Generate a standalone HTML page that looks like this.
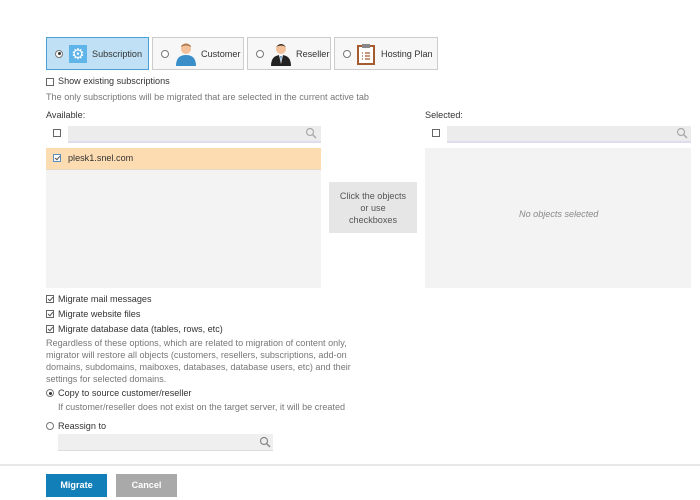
<!DOCTYPE html>
<html><head><style>
body{margin:0;width:700px;height:500px;background:#fff;font-family:"Liberation Sans",sans-serif;font-size:9.1px;color:#333;position:relative;overflow:hidden}
.a{position:absolute}
.tab{position:absolute;top:37px;height:33px;border:1px solid #ccc;background:#f7f7f7;box-sizing:border-box;display:flex;align-items:center;color:#333}
.tab.on{background:#bfe0f5;border-color:#4a9fd6}
.rad{width:8px;height:8px;border:1px solid #777;border-radius:50%;box-sizing:border-box;background:#fff;margin:0 6px 0 8px;position:relative}
.rad.f::after{content:"";position:absolute;left:1.5px;top:1.5px;width:3px;height:3px;border-radius:50%;background:#333}
.rad.p{position:absolute;margin:0}
.cb{position:absolute;width:8px;height:8px;border:1px solid #666;box-sizing:border-box;background:#fff}
.cb.k::after{content:"";position:absolute;left:2px;top:0px;width:2px;height:4px;border:solid #555;border-width:0 1px 1px 0;transform:rotate(40deg)}
.t{position:absolute;white-space:nowrap}
.g{color:#777}
.srch{position:absolute;height:15px;background:#ececec;border-bottom:2px solid #dde}
</style></head><body>
<div class="tab on" style="left:46px;width:103px"><span class="rad f"></span><span style="width:18px;height:18px;background:#5fb4ea;margin-right:5px;display:flex;align-items:center;justify-content:center;color:#fff;font-size:15px">⚙</span>Subscription</div>
<div class="tab" style="left:152px;width:92px"><span class="rad"></span><svg width="22" height="24" style="margin-right:4px"><circle cx="11" cy="7" r="5" fill="#f2c09a"/><path d="M6 4Q11 -1 16 4L16 5Q11 2 6 5Z" fill="#b07a4e"/><path d="M1 24Q1 13 11 13Q21 13 21 24Z" fill="#3b8fc8"/></svg>Customer</div>
<div class="tab" style="left:247px;width:84px"><span class="rad"></span><svg width="22" height="24" style="margin-right:4px"><circle cx="11" cy="7" r="5" fill="#f2c09a"/><path d="M6 5Q11 -1 16 5Q11 2 6 5Z" fill="#3a2a1c"/><path d="M1 24Q1 13 11 13Q21 13 21 24Z" fill="#222"/><path d="M9 13L11 22L13 13Z" fill="#fff"/><path d="M10.3 14L11 20L11.7 14Z" fill="#2a6fb0"/></svg>Reseller</div>
<div class="tab" style="left:334px;width:104px"><span class="rad"></span><svg width="18" height="22" style="margin-right:6px"><rect x="1" y="3" width="16" height="18" fill="#fff" stroke="#a65a2f" stroke-width="2"/><rect x="5" y="1" width="8" height="4" fill="#888"/><path d="M5 10h1M8 10h5M5 13h1M8 13h5M5 16h1M8 16h5" stroke="#a65a2f" stroke-width="1.3"/></svg>Hosting Plan</div>

<div class="cb" style="left:46px;top:78px"></div><div class="t" style="left:58px;top:76px">Show existing subscriptions</div>
<div class="t g" style="left:46px;top:92px">The only subscriptions will be migrated that are selected in the current active tab</div>
<div class="t" style="left:46px;top:110px">Available:</div>
<div class="t" style="left:425px;top:110px">Selected:</div>

<div class="cb" style="left:53px;top:129px"></div>
<div class="srch" style="left:68px;top:126px;width:253px"></div>
<svg class="a" style="left:305px;top:127px" width="12" height="12"><circle cx="5" cy="5" r="3.5" fill="none" stroke="#aaa" stroke-width="1.2"/><path d="M7.5 7.5L11 11" stroke="#aaa" stroke-width="1.5"/></svg>
<div class="a" style="left:46px;top:148px;width:275px;height:140px;background:#f3f3f3"></div>
<div class="a" style="left:46px;top:148px;width:275px;height:22px;background:#fddcb2;border-bottom:1px solid #e6d8c4;box-sizing:border-box"></div>
<div class="cb k" style="left:53px;top:154px;border-color:#5a8fc0"></div>
<div class="t" style="left:68px;top:153px">plesk1.snel.com</div>

<div class="a" style="left:329px;top:182px;width:88px;height:51px;background:#e6e6e6;color:#555;text-align:center;line-height:12px;padding-top:8px;box-sizing:border-box">Click the objects<br>or use<br>checkboxes</div>

<div class="cb" style="left:432px;top:129px"></div>
<div class="srch" style="left:447px;top:126px;width:244px"></div>
<svg class="a" style="left:676px;top:127px" width="12" height="12"><circle cx="5" cy="5" r="3.5" fill="none" stroke="#aaa" stroke-width="1.2"/><path d="M7.5 7.5L11 11" stroke="#aaa" stroke-width="1.5"/></svg>
<div class="a" style="left:425px;top:148px;width:266px;height:140px;background:#f3f3f3"></div>
<div class="t g" style="left:519px;top:209px;font-style:italic;color:#888">No objects selected</div>

<div class="cb k" style="left:46px;top:295px"></div><div class="t" style="left:58px;top:294px">Migrate mail messages</div>
<div class="cb k" style="left:46px;top:310px"></div><div class="t" style="left:58px;top:309px">Migrate website files</div>
<div class="cb k" style="left:46px;top:325px"></div><div class="t" style="left:58px;top:324px">Migrate database data (tables, rows, etc)</div>
<div class="t g" style="left:46px;top:337px;line-height:12px">Regardless of these options, which are related to migration of content only,<br>migrator will restore all objects (customers, resellers, subscriptions, add-on<br>domains, subdomains, maiboxes, databases, database users, etc) and their<br>settings for selected domains.</div>
<span class="rad f p" style="left:46px;top:389px"></span><div class="t" style="left:58px;top:388px">Copy to source customer/reseller</div>
<div class="t g" style="left:58px;top:402px">If customer/reseller does not exist on the target server, it will be created</div>
<span class="rad p" style="left:46px;top:422px"></span><div class="t" style="left:58px;top:421px">Reassign to</div>
<div class="srch" style="left:58px;top:434px;width:215px;height:16px;border-bottom:1px solid #ddd;background:#efefef"></div>
<svg class="a" style="left:259px;top:436px" width="12" height="12"><circle cx="5" cy="5" r="3.5" fill="none" stroke="#888" stroke-width="1.2"/><path d="M7.5 7.5L11 11" stroke="#888" stroke-width="1.5"/></svg>

<div class="a" style="left:0;top:464px;width:700px;height:2px;background:#e8e8e8"></div>
<div class="a" style="left:46px;top:474px;width:61px;height:23px;background:#137fb8;color:#fff;font-weight:bold;text-align:center;line-height:23px">Migrate</div>
<div class="a" style="left:116px;top:474px;width:61px;height:23px;background:#a9a9a9;color:#fff;font-weight:bold;text-align:center;line-height:23px">Cancel</div>
</body></html>
